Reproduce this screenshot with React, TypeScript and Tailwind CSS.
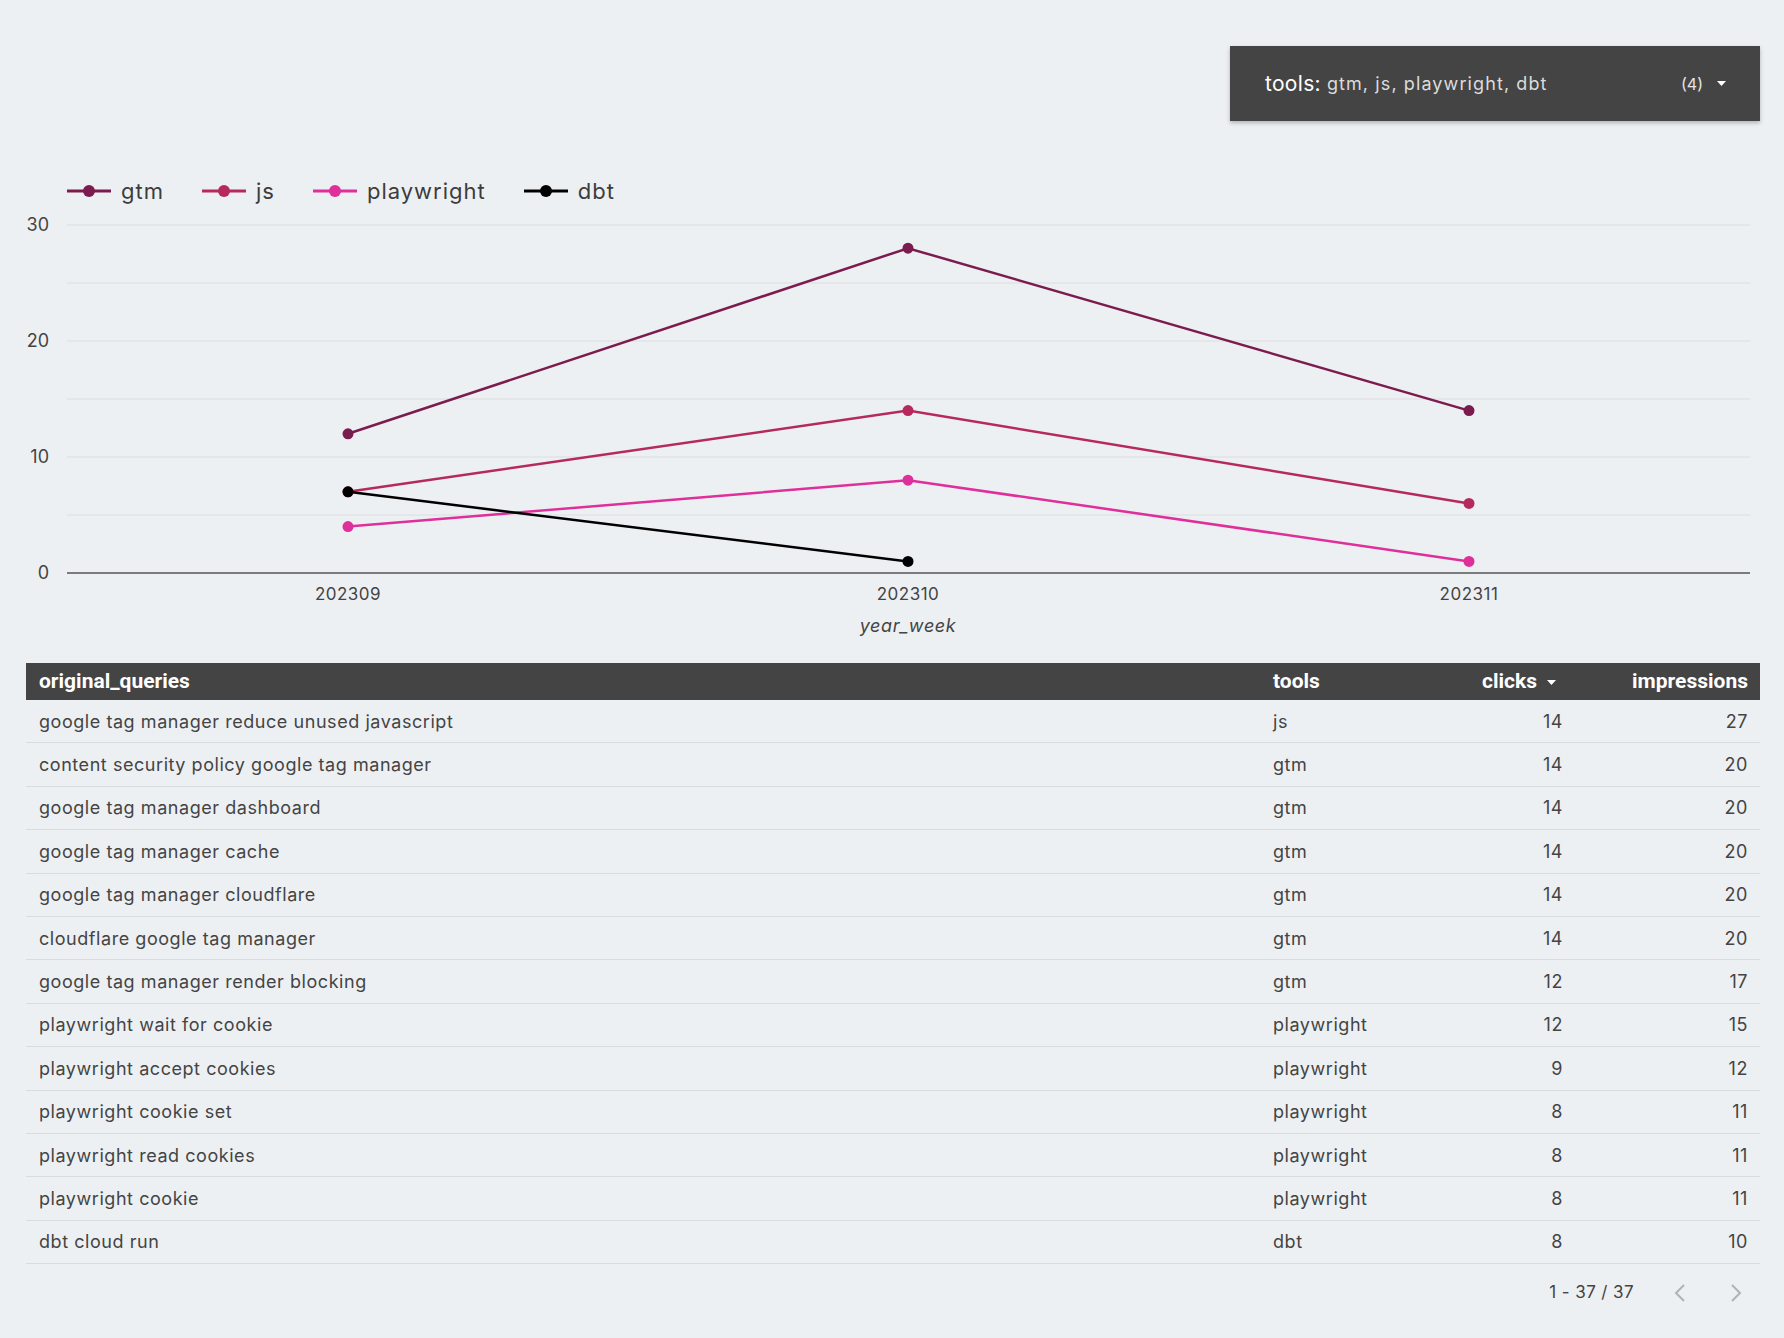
import React from 'react';

const SERIES = [
  { name: 'gtm', color: '#7b1b4e', values: [12, 28, 14] },
  { name: 'js', color: '#b6295f', values: [7, 14, 6] },
  { name: 'playwright', color: '#df2f9b', values: [4, 8, 1] },
  { name: 'dbt', color: '#000000', values: [7, 1] },
];

const WEEKS = ['202309', '202310', '202311'];
const XS = [348, 908, 1469];
const y = (v: number) => 367 - v * 11.6;

const ROWS: [string, string, number, number][] = [
  ['google tag manager reduce unused javascript', 'js', 14, 27],
  ['content security policy google tag manager', 'gtm', 14, 20],
  ['google tag manager dashboard', 'gtm', 14, 20],
  ['google tag manager cache', 'gtm', 14, 20],
  ['google tag manager cloudflare', 'gtm', 14, 20],
  ['cloudflare google tag manager', 'gtm', 14, 20],
  ['google tag manager render blocking', 'gtm', 12, 17],
  ['playwright wait for cookie', 'playwright', 12, 15],
  ['playwright accept cookies', 'playwright', 9, 12],
  ['playwright cookie set', 'playwright', 8, 11],
  ['playwright read cookies', 'playwright', 8, 11],
  ['playwright cookie', 'playwright', 8, 11],
  ['dbt cloud run', 'dbt', 8, 10],
];

const Caret = ({ className }: { className?: string }) => (
  <svg width="9" height="5" viewBox="0 0 9 5" className={className}>
    <path d="M0 0h9L4.5 5z" fill="currentColor" />
  </svg>
);

export default function App() {
  return (
    <div className="w-full min-h-[1338px] bg-[#edf0f3] font-['Inter',sans-serif] text-[#444]">
      {/* Filter control */}
      <div className="flex justify-end pt-[46px] pr-[24px]">
        <div className="w-[530px] h-[75px] bg-[#444444] shadow-[0_2px_4px_rgba(0,0,0,0.25)] flex items-center pl-[35px] pr-[34px]">
          <span className="text-[21px] text-white tracking-[0.3px]">tools:</span>
          <span className="text-[18px] text-[#dcdcdc] ml-[6px] tracking-[1.1px]">gtm, js, playwright, dbt</span>
          <span className="ml-auto text-[16px] text-[#e6e6e6]">(4)</span>
          <Caret className="ml-[14px] text-white" />
        </div>
      </div>

      {/* Legend */}
      <div className="flex items-center h-[30px] mt-[55px] pl-[67px] gap-[38px]">
        {SERIES.map((s) => (
          <div key={s.name} className="flex items-center gap-[10px]">
            <svg width="44" height="14" viewBox="0 0 44 14">
              <line x1="0" y1="7" x2="44" y2="7" stroke={s.color} strokeWidth="3" />
              <circle cx="22" cy="7" r="6" fill={s.color} />
            </svg>
            <span className="text-[22px] tracking-[1px] text-[#3c3c3c] leading-none">{s.name}</span>
          </div>
        ))}
      </div>

      {/* Chart */}
      <svg width="1784" height="444" viewBox="0 0 1784 444" className="block">
        {[30, 25, 20, 15, 10, 5].map((v) => (
          <line key={v} x1="67" x2="1750" y1={y(v)} y2={y(v)} stroke="#dadde0" strokeWidth="1" />
        ))}
        <line x1="67" x2="1750" y1={y(0)} y2={y(0)} stroke="#555" strokeWidth="1.5" />
        {[30, 20, 10, 0].map((v) => (
          <text key={v} x="49" y={y(v) + 6} textAnchor="end" fontSize="18" fill="#444" fontFamily="Inter, sans-serif">
            {v}
          </text>
        ))}
        {WEEKS.map((w, i) => (
          <text key={w} x={XS[i]} y="394" textAnchor="middle" fontSize="17" letterSpacing="0.5" fill="#444" fontFamily="Inter, sans-serif">
            {w}
          </text>
        ))}
        <text x="908" y="426" textAnchor="middle" fontSize="18" letterSpacing="0.6" fontStyle="italic" fill="#444" fontFamily="Inter, sans-serif">
          year_week
        </text>
        {SERIES.map((s) => (
          <g key={s.name}>
            <polyline
              points={s.values.map((v, i) => `${XS[i]},${y(v)}`).join(' ')}
              fill="none"
              stroke={s.color}
              strokeWidth="2.5"
            />
            {s.values.map((v, i) => (
              <circle key={i} cx={XS[i]} cy={y(v)} r="5.5" fill={s.color} />
            ))}
          </g>
        ))}
      </svg>

      {/* Table */}
      <div className="mr-[24px] ml-[26px] mt-[13px]">
        <div className="flex items-center h-[37px] bg-[#444444] text-white font-['Roboto',sans-serif] font-bold text-[21px] pl-[13px] pr-[12px]">
          <div className="flex-1">original_queries</div>
          <div className="w-[200px]">tools</div>
          <div className="w-[90px] flex items-center justify-end pr-[7px]">
            clicks
            <Caret className="ml-[10px] mt-[2px]" />
          </div>
          <div className="w-[185px] text-right">impressions</div>
        </div>
        {ROWS.map(([q, t, c, imp], i) => (
          <div key={i} className="flex items-center h-[43.4px] border-b border-[#d9dcdf] pl-[13px] pr-[12px] text-[18px] tracking-[0.55px] text-[#444]">
            <div className="flex-1">{q}</div>
            <div className="w-[200px]">{t}</div>
            <div className="w-[90px] text-right">{c}</div>
            <div className="w-[185px] text-right">{imp}</div>
          </div>
        ))}
        <div className="flex items-center justify-end h-[58px] pr-[18px] text-[17px] tracking-[0.4px] text-[#444]">
          <span>1 - 37 / 37</span>
          <svg width="12" height="20" viewBox="0 0 12 20" className="ml-[40px]">
            <path d="M10 2L2 10l8 8" fill="none" stroke="#b0b3b6" strokeWidth="2" />
          </svg>
          <svg width="12" height="20" viewBox="0 0 12 20" className="ml-[44px]">
            <path d="M2 2l8 8-8 8" fill="none" stroke="#b0b3b6" strokeWidth="2" />
          </svg>
        </div>
      </div>
    </div>
  );
}
